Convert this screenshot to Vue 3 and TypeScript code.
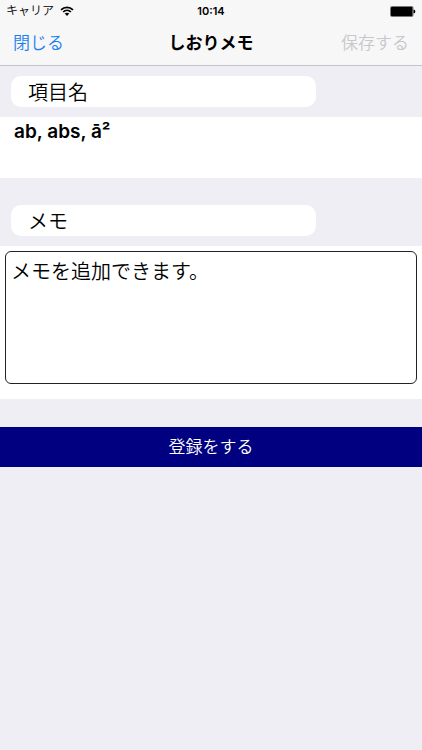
<script setup lang="ts">
import { ref } from 'vue'

const itemName = ref('ab, abs, ā²')
const memo = ref('メモを追加できます。')
</script>

<template>
  <div class="screen">
    <header class="top">
      <div class="status">
        <div class="carrier">
          <span>キャリア</span>
          <svg class="wifi" viewBox="0 0 14 10" aria-hidden="true">
            <path d="M1 3.9C4.4.6 9.6.6 13 3.9" />
            <path d="M3.1 6C5.3 3.9 8.7 3.9 10.9 6" />
            <path class="dot" d="M7 10 4.7 7.5Q7 5.8 9.3 7.5Z" />
          </svg>
        </div>
        <time class="clock">10:14</time>
        <svg class="battery" viewBox="0 0 26 11" aria-hidden="true">
          <rect class="shell" x="0.5" y="0.5" width="22.5" height="10" rx="1" />
          <rect x="1" y="1" width="21.5" height="9" rx="0.6" />
          <path d="M23.5 3.7h.8q1 0 1 1.8t-1 1.8h-.8z" />
        </svg>
      </div>
      <nav class="nav">
        <button type="button" class="action">閉じる</button>
        <h1 class="title">しおりメモ</h1>
        <button type="button" class="action save" disabled>保存する</button>
      </nav>
    </header>

    <form class="form" @submit.prevent>
      <label class="pill" for="item-name">項目名</label>
      <div class="panel">
        <input id="item-name" v-model="itemName" class="name" type="text" />
      </div>
      <label class="pill second" for="memo">メモ</label>
      <div class="panel">
        <textarea id="memo" v-model="memo" class="memo"></textarea>
      </div>
      <button type="submit" class="submit">登録をする</button>
    </form>
  </div>
</template>

<style>
body {
  background: #efeef4;
}
</style>

<style scoped>
.screen {
  min-height: 100vh;
  background: #efeef4;
  color: #000;
  font-family: "Liberation Sans", "Noto Sans CJK JP", sans-serif;
  font-weight: 350;
}

.screen * {
  box-sizing: border-box;
}

button,
input,
textarea {
  margin: 0;
  padding: 0;
  border: 0;
  border-radius: 0;
  background: none;
  color: inherit;
  font-family: inherit;
  font-weight: inherit;
  outline: none;
}

.top {
  background: #f7f7f8;
  border-bottom: 1px solid #c4c4c8;
}

.status {
  display: grid;
  grid-template-columns: 1fr auto 1fr;
  align-items: center;
  height: 22px;
  padding: 0 6px;
}

.carrier {
  display: flex;
  align-items: center;
  gap: 6px;
  font-size: 12px;
  line-height: 20px;
}

.wifi {
  width: 14px;
  height: 10px;
}

.wifi path {
  fill: none;
  stroke: #000;
  stroke-width: 1.7;
}

.wifi .dot {
  fill: #000;
  stroke: none;
}

.clock {
  font-family: Inter, "Liberation Sans", sans-serif;
  font-size: 11px;
  font-weight: 600;
}

.battery {
  justify-self: end;
  width: 26px;
  height: 11px;
}

.battery .shell {
  fill: none;
  stroke: #777;
}

.nav {
  display: grid;
  grid-template-columns: 1fr auto 1fr;
  align-items: center;
  height: 43px;
  padding: 0 13px;
}

.action {
  justify-self: start;
  color: #1a82f0;
  font-size: 17px;
  line-height: 24px;
}

.save {
  justify-self: end;
  color: #c8c8cb;
}

.title {
  margin: 0;
  font-size: 17px;
  font-weight: 700;
  line-height: 24px;
}

.form {
  display: flex;
  flex-direction: column;
  padding-top: 10px;
}

.pill {
  width: 305px;
  max-width: calc(100% - 22px);
  height: 31px;
  margin: 0 11px 10px;
  padding-left: 17px;
  border-radius: 10px;
  background: #fff;
  font-size: 20px;
  line-height: 34px;
}

.second {
  margin-top: 27px;
}

.panel {
  padding: 5px;
  background: #fff;
}

.name {
  display: block;
  width: 100%;
  height: 20px;
  margin-bottom: 31px;
  padding-left: 9px;
  font-family: Inter, "Liberation Sans", sans-serif;
  font-size: 19px;
  font-weight: 600;
  line-height: 20px;
}

.memo {
  display: block;
  width: 100%;
  height: 133px;
  margin-bottom: 10px;
  padding: 5px;
  border: 1px solid #222;
  border-radius: 6px;
  font-size: 20px;
  line-height: 30px;
  resize: none;
}

.submit {
  height: 40px;
  margin-top: 28px;
  background: #000080;
  color: #fff;
  font-size: 17px;
  line-height: 42px;
}
</style>
